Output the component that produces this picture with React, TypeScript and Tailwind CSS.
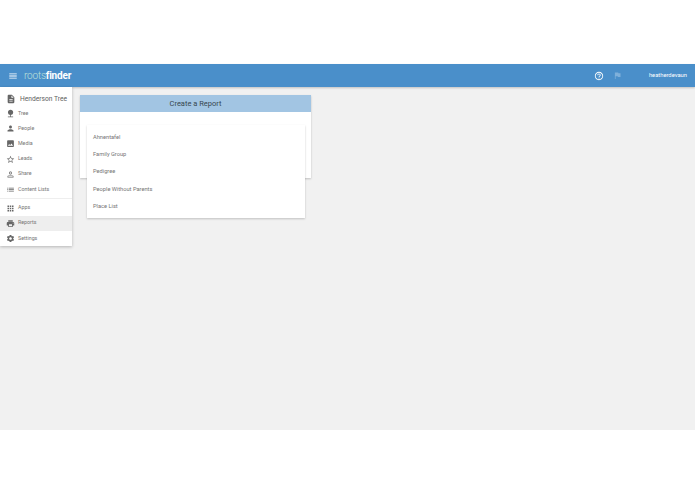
import React from 'react';
import {
  MdMenu, MdHelpOutline, MdFlag, MdDescription, MdNature, MdPerson, MdImage, MdStarBorder,
  MdPersonOutline, MdList, MdApps, MdPrint, MdSettings,
} from 'react-icons/md';

const reports = ['Ahnentafel', 'Family Group', 'Pedigree', 'People Without Parents', 'Place List'];

function SideItem({ icon, label, active }: { icon: React.ReactNode; label: string; active?: boolean }) {
  return (
    <div className={`flex h-[15.2px] items-center gap-[3px] pl-[6px] ${active ? 'bg-[#eeeeee]' : ''}`}>
      <span className="flex w-[9px] justify-center text-[9px] text-[#666666]">{icon}</span>
      <span className="text-[5.3px] text-[#757575]">{label}</span>
    </div>
  );
}

export default function App() {
  return (
    <div className="h-[494px] w-[695px] overflow-hidden bg-white font-['Roboto',sans-serif]">
      <div className="h-[64px]" />
      <div className="flex h-[366px] flex-col bg-[#f1f1f1]">
        {/* Top bar */}
        <header className="flex h-[23px] shrink-0 items-center bg-[#4a8fca] pl-[8px] pr-[8px] shadow-[0_1px_2px_rgba(0,0,0,0.2)]">
          <MdMenu className="text-[10px] text-white" />
          <div className="ml-[6px] text-[10px] leading-none tracking-[-0.2px]">
            <span className="font-light text-[#bfe0d8]">roots</span>
            <span className="font-bold text-white">finder</span>
          </div>
          <div className="ml-auto flex items-center">
            <MdHelpOutline className="text-[10px] text-white" />
            <MdFlag className="ml-[9px] text-[9px] text-[#7fb0da]" />
            <span className="ml-[27px] text-[5.8px] text-white">heatherdevaun</span>
          </div>
        </header>

        <div className="flex flex-1 items-start">
          {/* Sidebar */}
          <aside className="w-[72px] shrink-0 bg-white shadow-[0_1px_3px_rgba(0,0,0,0.25)]">
            <div className="flex h-[19px] items-end gap-[4px] pl-[6px] pb-[1.5px]">
              <MdDescription className="mb-[0.5px] text-[10px] text-[#666666]" />
              <span className="text-[6.7px] text-[#616161]">Henderson Tree</span>
            </div>
            <SideItem icon={<MdNature />} label="Tree" />
            <SideItem icon={<MdPerson />} label="People" />
            <SideItem icon={<MdImage />} label="Media" />
            <SideItem icon={<MdStarBorder />} label="Leads" />
            <SideItem icon={<MdPersonOutline />} label="Share" />
            <SideItem icon={<MdList />} label="Content Lists" />
            <div className="my-[1.2px] h-px bg-[#eeeeee]" />
            <SideItem icon={<MdApps />} label="Apps" />
            <SideItem icon={<MdPrint />} label="Reports" active />
            <SideItem icon={<MdSettings />} label="Settings" />
          </aside>

          {/* Create a report card */}
          <main className="relative ml-[8px] mt-[8px] w-[231px]">
            <div className="h-[83px] bg-white shadow-[0_1px_2px_rgba(0,0,0,0.2)]">
              <div className="flex h-[17px] items-center justify-center bg-[#a2c5e3] text-[7.5px] text-[#37474f]">
                Create a Report
              </div>
            </div>
            {/* Report type menu */}
            <div className="absolute left-[7px] top-[30px] w-[218px] bg-white py-[3.5px] shadow-[0_1px_2px_rgba(0,0,0,0.2)]">
              {reports.map((r) => (
                <div key={r} className="flex h-[17.3px] items-center pl-[6px] text-[5.7px] text-[#757575]">
                  {r}
                </div>
              ))}
            </div>
          </main>
        </div>
      </div>
    </div>
  );
}
